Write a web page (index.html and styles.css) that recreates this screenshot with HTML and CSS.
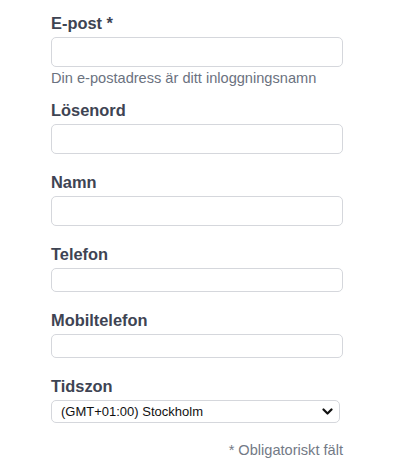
FILE: index.html
```html
<!DOCTYPE html>
<html lang="sv">
<head>
<meta charset="utf-8">
<title>Konto</title>
<link rel="stylesheet" href="styles.css">
</head>
<body>
<form class="form">
  <div class="field field--with-help">
    <label class="label">E-post *</label>
    <input class="input" type="email">
    <p class="help">Din e-postadress är ditt inloggningsnamn</p>
  </div>
  <div class="field">
    <label class="label">Lösenord</label>
    <input class="input" type="password">
  </div>
  <div class="field">
    <label class="label">Namn</label>
    <input class="input" type="text">
  </div>
  <div class="field">
    <label class="label">Telefon</label>
    <input class="input input--small" type="text">
  </div>
  <div class="field">
    <label class="label">Mobiltelefon</label>
    <input class="input input--small" type="text">
  </div>
  <div class="field field--last">
    <label class="label">Tidszon</label>
    <div class="select-wrap">
      <select class="select">
        <option>(GMT+01:00) Stockholm</option>
      </select>
      <svg class="chevron" width="11" height="7" viewBox="0 0 11 7"><path d="M1.5 1.5 L5.5 5.5 L9.5 1.5" fill="none" stroke="#111" stroke-width="2.2" stroke-linecap="round" stroke-linejoin="round"/></svg>
    </div>
  </div>
  <p class="required">* Obligatoriskt fält</p>
</form>
</body>
</html>
```

FILE: styles.css
```css
html, body {
  margin: 0;
  padding: 0;
  background: #ffffff;
}
body {
  font-family: "Liberation Sans", Arial, Helvetica, sans-serif;
}
.form {
  margin: 0 0 0 51px;
  padding-top: 13px;
  width: 292px;
  display: flex;
  flex-direction: column;
}
.field {
  display: flex;
  flex-direction: column;
  margin-bottom: 18px;
}
.field--with-help {
  margin-bottom: 13px;
}
.field--last {
  margin-bottom: 18px;
}
.label {
  display: block;
  font-size: 16.4px;
  font-weight: 700;
  line-height: 20px;
  color: #3e4453;
  margin-bottom: 4px;
}
.input {
  box-sizing: border-box;
  width: 292px;
  height: 30px;
  margin: 0;
  border: 1px solid #d5d7dc;
  border-radius: 5px;
  background: #ffffff;
  font: inherit;
  font-size: 14px;
  padding: 0 8px;
  outline: none;
}
.input--small {
  height: 24px;
}
.help {
  margin: 2px 0 0;
  font-size: 14.6px;
  line-height: 18px;
  color: #6b7280;
}
.select-wrap {
  position: relative;
  width: 289px;
}
.select {
  box-sizing: border-box;
  width: 289px;
  height: 23px;
  margin: 0;
  -webkit-appearance: none;
  appearance: none;
  border: 1px solid #d5d7dc;
  border-radius: 5px;
  background: #ffffff;
  font-family: "Liberation Sans", Arial, Helvetica, sans-serif;
  font-size: 13px;
  color: #111111;
  padding: 0 24px 0 9px;
  outline: none;
}
.chevron {
  position: absolute;
  right: 7px;
  top: 8px;
}
.required {
  margin: 0;
  text-align: right;
  font-size: 14.6px;
  line-height: 18px;
  color: #737a86;
}
```
